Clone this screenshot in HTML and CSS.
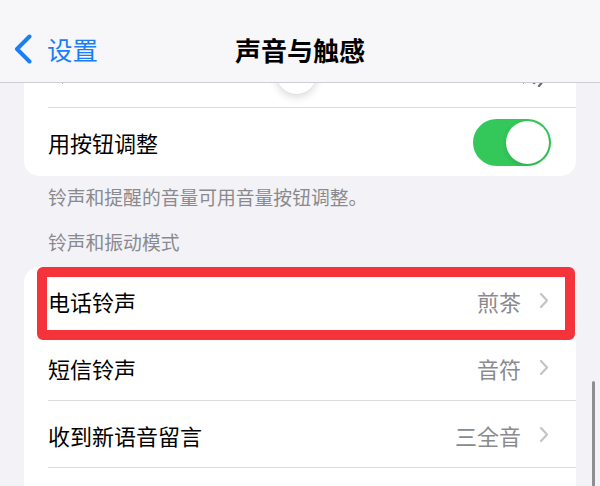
FILE: index.html
```html
<!DOCTYPE html>
<html lang="zh-CN">
<head>
<meta charset="utf-8">
<title>声音与触感</title>
<link rel="stylesheet" href="styles.css">
</head>
<body>
<div class="screen">
  <header class="nav">
    <a class="back">
      <svg class="back-chev" width="18" height="30" viewBox="0 0 18 30"><polyline points="15.5,2.5 3,15 15.5,27.5" fill="none" stroke="#1a7ef6" stroke-width="4" stroke-linecap="round" stroke-linejoin="round"/></svg>
      <span>设置</span>
    </a>
    <h1 class="title">声音与触感</h1>
    <div></div>
  </header>

  <main class="content">
    <section class="card">
      <div class="row slider-row">
        <svg class="spk" width="20" height="26" viewBox="0 0 20 26"><path d="M2 9h5l7-6v20l-7-6H2z" fill="#6d6d72"/></svg>
        <div class="track"><div class="thumb"></div></div>
        <svg class="spk" width="40" height="26" viewBox="0 0 40 26"><path d="M2 9h5l7-6v20l-7-6H2z" fill="#6d6d72"/><path d="M19 8a7 7 0 0 1 0 10M24 4a12 12 0 0 1 0 18M29 1a17 17 0 0 1 0 24" fill="none" stroke="#6d6d72" stroke-width="2.4" stroke-linecap="round"/></svg>
      </div>
      <div class="row">
        <span class="label">用按钮调整</span>
        <span class="toggle on"><span class="knob"></span></span>
      </div>
    </section>
    <p class="footnote">铃声和提醒的音量可用音量按钮调整。</p>

    <h2 class="section-head">铃声和振动模式</h2>
    <section class="card">
      <div class="row link highlighted">
        <span class="label">电话铃声</span>
        <span class="value">煎茶</span>
        <svg class="chev" width="10" height="17" viewBox="0 0 10 17"><polyline points="2,2 8,8.5 2,15" fill="none" stroke="#c4c4c7" stroke-width="2.2" stroke-linecap="round" stroke-linejoin="round"/></svg>
        <span class="mark"></span>
      </div>
      <div class="row link">
        <span class="label">短信铃声</span>
        <span class="value">音符</span>
        <svg class="chev" width="10" height="17" viewBox="0 0 10 17"><polyline points="2,2 8,8.5 2,15" fill="none" stroke="#c4c4c7" stroke-width="2.2" stroke-linecap="round" stroke-linejoin="round"/></svg>
      </div>
      <div class="row link">
        <span class="label">收到新语音留言</span>
        <span class="value">三全音</span>
        <svg class="chev" width="10" height="17" viewBox="0 0 10 17"><polyline points="2,2 8,8.5 2,15" fill="none" stroke="#c4c4c7" stroke-width="2.2" stroke-linecap="round" stroke-linejoin="round"/></svg>
      </div>
      <div class="row link"></div>
    </section>
  </main>
  <div class="scrollbar"></div>
</div>
</body>
</html>
```
FILE: styles.css
```css
* { box-sizing: border-box; }
html, body {
  margin: 0;
  padding: 0;
  width: 600px;
  height: 486px;
  overflow: hidden;
  background: #f2f2f7;
  font-family: "Noto Sans CJK SC", "Noto Sans", sans-serif;
}
.screen {
  position: relative;
  width: 600px;
  height: 486px;
  overflow: hidden;
}
.nav {
  position: absolute;
  top: 0;
  left: 0;
  right: 0;
  height: 83px;
  padding-top: 16px;
  background: #f7f7f9;
  border-bottom: 1px solid #cfcfd3;
  display: grid;
  grid-template-columns: 1fr auto 1fr;
  align-items: center;
  z-index: 5;
}
.back {
  display: flex;
  align-items: center;
  padding-left: 14px;
  color: #1a7ef6;
  font-size: 25.5px;
  line-height: 30px;
  gap: 15px;
}
.back span { margin-top: -1px; }
.title {
  margin: 0;
  font-size: 26px;
  font-weight: 700;
  color: #000;
  line-height: 30px;
  margin-top: 2px;
}
.content {
  padding-top: 40px;
}
.card {
  margin: 0 24px;
  background: #fff;
  border-radius: 15px;
}
.row {
  position: relative;
  height: 68px;
  display: flex;
  align-items: center;
  padding: 0 25px 0 24px;
}
.row::after {
  content: "";
  position: absolute;
  left: 24px;
  right: 0;
  bottom: 0;
  height: 1px;
  background: #dcdce0;
}
.row:last-child::after { display: none; }
.slider-row {
  gap: 16px;
  padding: 0 26px 0 25px;
}
.track {
  flex: 1;
  height: 4px;
  border-radius: 2px;
  background: #d1d1d6;
  position: relative;
}
.thumb {
  position: absolute;
  left: 51.5%;
  top: 50%;
  width: 41px;
  height: 41px;
  margin: -21px 0 0 -20px;
  border-radius: 50%;
  background: #fff;
  box-shadow: 0 3px 8px rgba(0,0,0,0.15), 0 0 1px rgba(0,0,0,0.12);
}
.label {
  flex: 1;
  font-size: 22px;
  color: #000;
  line-height: 30px;
}
.toggle {
  width: 78px;
  height: 47px;
  border-radius: 24px;
  background: #34c759;
  position: relative;
}
.knob {
  position: absolute;
  top: 2px;
  right: 2px;
  width: 43px;
  height: 43px;
  border-radius: 50%;
  background: #fff;
  box-shadow: 0 2px 5px rgba(0,0,0,0.12);
}
.footnote {
  margin: 0;
  padding: 9px 40px 0 48px;
  font-size: 18.8px;
  line-height: 24px;
  color: #8a8a8e;
}
.section-head {
  margin: 0;
  padding: 21px 48px 13px;
  font-size: 18.8px;
  line-height: 24px;
  font-weight: 400;
  color: #8a8a8e;
}
.link { height: 67px; padding-right: 27px; }
.value {
  font-size: 22px;
  color: #8a8a8e;
  line-height: 30px;
  margin-right: 18px;
}
.chev { display: block; }
.mark {
  position: absolute;
  left: 13px;
  right: 1px;
  top: 0;
  bottom: -6px;
  border: 10px solid #f5333b;
  border-radius: 6px;
  z-index: 2;
}
.scrollbar {
  position: absolute;
  right: 5px;
  top: 381px;
  width: 3.5px;
  height: 120px;
  border-radius: 2px;
  background: #8e8e93;
  z-index: 6;
}
```
